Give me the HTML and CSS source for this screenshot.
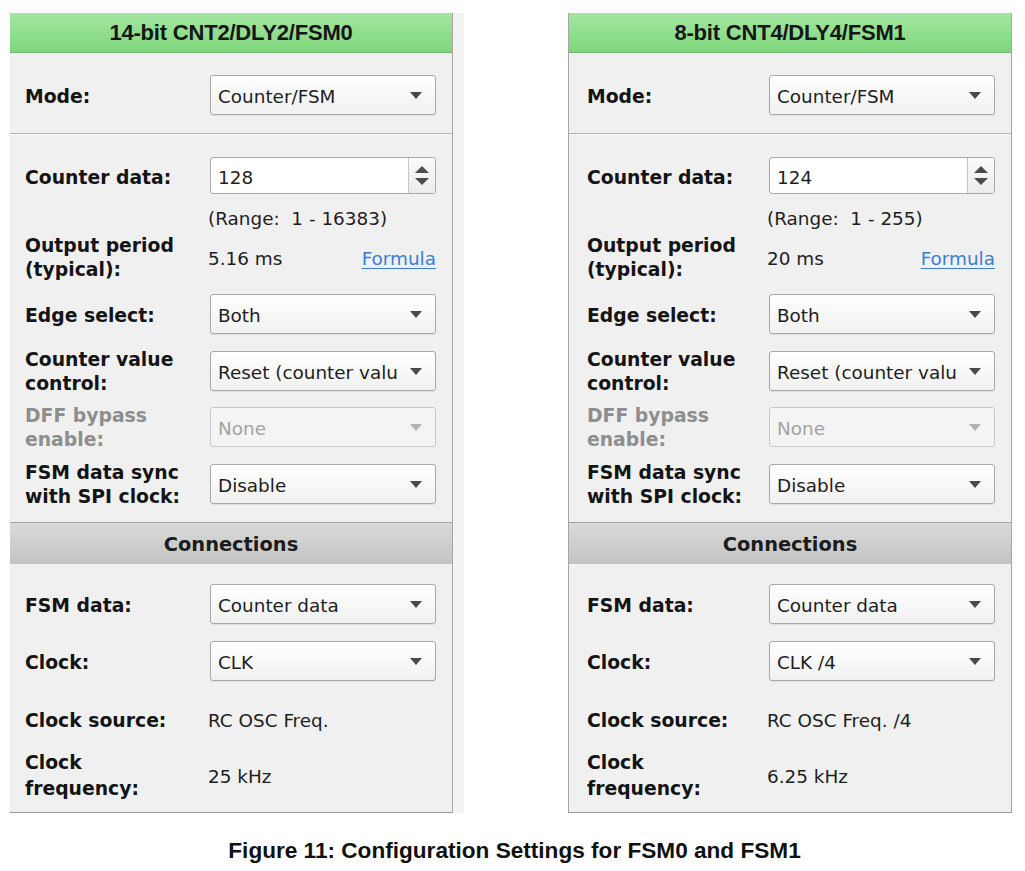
FILE: index.html
```html
<!DOCTYPE html>
<html>
<head>
<meta charset="utf-8">
<link rel="stylesheet" href="styles.css">
</head>
<body>
<div class="figure">
  <div class="panels">
    <section class="panel left">
      <div class="panel-head">14-bit CNT2/DLY2/FSM0</div>
      <div class="sec sec-mode">
        <div class="row"><div class="lbl">Mode:</div><div class="sel"><span>Counter/FSM</span><i class="arrow"></i></div></div>
      </div>
      <div class="sec sec-main">
        <div class="row row-input"><div class="lbl">Counter data:</div><div class="spin"><span class="val">128</span><span class="spin-btns"><i class="up"></i><i class="down"></i></span></div></div>
        <div class="row row-text row-range"><div class="lbl"></div><div class="txt">(Range:&nbsp; 1 - 16383)</div></div>
        <div class="row row-tall row-out"><div class="lbl">Output period<br>(typical):</div><div class="txt split"><span>5.16 ms</span><a class="link">Formula</a></div></div>
        <div class="row row-edge"><div class="lbl">Edge select:</div><div class="sel"><span>Both</span><i class="arrow"></i></div></div>
        <div class="row row-cvc"><div class="lbl">Counter value<br>control:</div><div class="sel"><span>Reset (counter valu</span><i class="arrow"></i></div></div>
        <div class="row row-dff"><div class="lbl dis">DFF bypass<br>enable:</div><div class="sel disabled"><span>None</span><i class="arrow"></i></div></div>
        <div class="row row-sync"><div class="lbl">FSM data sync<br>with SPI clock:</div><div class="sel"><span>Disable</span><i class="arrow"></i></div></div>
      </div>
      <div class="sub-head">Connections</div>
      <div class="sec sec-conn">
        <div class="row row-fsm"><div class="lbl">FSM data:</div><div class="sel"><span>Counter data</span><i class="arrow"></i></div></div>
        <div class="row row-clk"><div class="lbl">Clock:</div><div class="sel"><span>CLK</span><i class="arrow"></i></div></div>
        <div class="row row-text row-src"><div class="lbl">Clock source:</div><div class="txt">RC OSC Freq.</div></div>
        <div class="row row-freq"><div class="lbl">Clock<br>frequency:</div><div class="txt">25 kHz</div></div>
      </div>
    </section>
    <section class="panel right">
      <div class="panel-head">8-bit CNT4/DLY4/FSM1</div>
      <div class="sec sec-mode">
        <div class="row"><div class="lbl">Mode:</div><div class="sel"><span>Counter/FSM</span><i class="arrow"></i></div></div>
      </div>
      <div class="sec sec-main">
        <div class="row row-input"><div class="lbl">Counter data:</div><div class="spin"><span class="val">124</span><span class="spin-btns"><i class="up"></i><i class="down"></i></span></div></div>
        <div class="row row-text row-range"><div class="lbl"></div><div class="txt">(Range:&nbsp; 1 - 255)</div></div>
        <div class="row row-tall row-out"><div class="lbl">Output period<br>(typical):</div><div class="txt split"><span>20 ms</span><a class="link">Formula</a></div></div>
        <div class="row row-edge"><div class="lbl">Edge select:</div><div class="sel"><span>Both</span><i class="arrow"></i></div></div>
        <div class="row row-cvc"><div class="lbl">Counter value<br>control:</div><div class="sel"><span>Reset (counter valu</span><i class="arrow"></i></div></div>
        <div class="row row-dff"><div class="lbl dis">DFF bypass<br>enable:</div><div class="sel disabled"><span>None</span><i class="arrow"></i></div></div>
        <div class="row row-sync"><div class="lbl">FSM data sync<br>with SPI clock:</div><div class="sel"><span>Disable</span><i class="arrow"></i></div></div>
      </div>
      <div class="sub-head">Connections</div>
      <div class="sec sec-conn">
        <div class="row row-fsm"><div class="lbl">FSM data:</div><div class="sel"><span>Counter data</span><i class="arrow"></i></div></div>
        <div class="row row-clk"><div class="lbl">Clock:</div><div class="sel"><span>CLK /4</span><i class="arrow"></i></div></div>
        <div class="row row-text row-src"><div class="lbl">Clock source:</div><div class="txt">RC OSC Freq. /4</div></div>
        <div class="row row-freq"><div class="lbl">Clock<br>frequency:</div><div class="txt">6.25 kHz</div></div>
      </div>
    </section>
  </div>
  <p class="caption">Figure 11: Configuration Settings for FSM0 and FSM1</p>
</div>
</body>
</html>
```
FILE: styles.css
```css
* { box-sizing: border-box; }
html, body { margin: 0; padding: 0; background: #ffffff; }
body { width: 1025px; height: 871px; overflow: hidden; font-family: "DejaVu Sans", Verdana, sans-serif; color: #1c1c1c; }

.figure { padding-top: 13px; }
.panels { display: flex; align-items: flex-start; }

.panel {
  --pl: 15px;
  width: 443px;
  background: #f0f0f0;
  border-bottom: 1px solid #9a9a9a;
}
.panel.left {
  margin-left: 10px;
  border-right: 1px solid #a6a6a6;
  box-shadow: 11px 0 0 #f3f3f3;
}
.panel.right {
  --pl: 18px;
  margin-left: 115px;
  width: 444px;
  border-left: 1px solid #a6a6a6;
  border-right: 1px solid #a6a6a6;
}

.panel-head {
  height: 40px;
  background: linear-gradient(#a4e6a0, #7ed77c);
  border-bottom: 1px solid #6fb86d;
  font-family: "Liberation Sans", Arial, sans-serif;
  font-weight: bold;
  font-size: 22px;
  line-height: 40px;
  text-align: center;
  color: #161616;
  letter-spacing: -0.2px;
}

.sec { padding-left: var(--pl); padding-right: 16px; }
.sec-mode {
  padding-top: 22px;
  padding-bottom: 18px;
  border-bottom: 1px solid #b0b0b0;
  box-shadow: 0 1px 0 #fbfbfb;
}
.sec-main { padding-top: 23px; padding-bottom: 18px; }
.sec-conn { padding-top: 20px; padding-bottom: 11px; }

.row {
  display: flex;
  align-items: center;
  height: 40px;
}
.row > :first-child { flex: none; width: calc(200px - var(--pl)); }
.row > :last-child { flex: 1; min-width: 0; }
.row-input { height: 37px; }
.row-text { height: 24px; }
.row-tall { height: 48px; }
.row-range { margin-top: 11px; }
.row-out { margin-top: 4px; }
.row-edge { margin-top: 13px; }
.row-cvc { margin-top: 17px; }
.row-dff { margin-top: 16px; }
.row-sync { margin-top: 17px; }
.row-clk { margin-top: 17px; }
.row-src { margin-top: 26px; }
.row-freq { margin-top: 18px; height: 52px; }
.row-freq .lbl { line-height: 26px; }

.lbl {
  font-weight: bold;
  font-size: 18.8px;
  line-height: 24px;
  padding-top: 4px;
  color: #141414;
  white-space: nowrap;
}
.row-tall .lbl, .row-cvc .lbl, .row-dff .lbl, .row-sync .lbl, .row-freq .lbl { padding-top: 2px; }
.lbl.dis { color: #8e8e8e; }

.txt {
  font-size: 18.4px;
  line-height: 24px;
  padding-top: 4px;
  color: #1e1e1e;
  margin-left: -2px;
  white-space: nowrap;
}
.split { display: flex; justify-content: space-between; align-items: center; }
.link { color: #3a7ed6; text-decoration: underline; text-underline-offset: 3px; }

.sel {
  position: relative;
  height: 40px;
  border: 1px solid #a9a9a9;
  border-radius: 3px;
  background: linear-gradient(#ffffff, #f1f1f1);
  box-shadow: 0 1px 1px rgba(0,0,0,0.08);
  display: flex;
  align-items: center;
  padding-left: 7px;
  padding-top: 3px;
  font-size: 18.4px;
  color: #1e1e1e;
  white-space: nowrap;
  overflow: hidden;
}
.sel span { overflow: hidden; max-width: 180px; }
.arrow {
  position: absolute;
  right: 13px;
  top: 16px;
  width: 0; height: 0;
  border-left: 6px solid transparent;
  border-right: 6px solid transparent;
  border-top: 7px solid #4a4a4a;
}
.sel.disabled { border-color: #c9c9c9; background: #f4f4f4; color: #a3a3a3; box-shadow: none; }
.sel.disabled .arrow { border-top-color: #b3b3b3; }

.spin {
  height: 37px;
  border: 1px solid #a9a9a9;
  border-radius: 3px;
  background: #ffffff;
  display: flex;
  align-items: center;
  font-size: 18.4px;
  color: #1e1e1e;
  overflow: hidden;
}
.spin .val { flex: 1; padding-left: 7px; padding-top: 3px; }
.spin-btns {
  width: 27px;
  height: 100%;
  border-left: 1px solid #c6c6c6;
  background: linear-gradient(#fafafa, #ececec);
  display: flex;
  flex-direction: column;
  align-items: center;
  justify-content: center;
  gap: 5px;
}
.spin-btns .up {
  width: 0; height: 0;
  border-left: 7px solid transparent;
  border-right: 7px solid transparent;
  border-bottom: 7px solid #4c4c4c;
}
.spin-btns .down {
  width: 0; height: 0;
  border-left: 7px solid transparent;
  border-right: 7px solid transparent;
  border-top: 7px solid #4c4c4c;
}

.sub-head {
  height: 42px;
  border-top: 1px solid #a3a3a3;
  background: linear-gradient(#dadada, #c3c3c3);
  text-align: center;
  font-weight: bold;
  font-size: 19.4px;
  line-height: 43px;
  color: #1c1c1c;
}

.caption {
  margin: 25px 0 0 0;
  text-align: center;
  font-family: "Liberation Sans", Arial, sans-serif;
  font-weight: bold;
  font-size: 22.6px;
  line-height: 26px;
  color: #111111;
  padding-left: 4px;
}
```
